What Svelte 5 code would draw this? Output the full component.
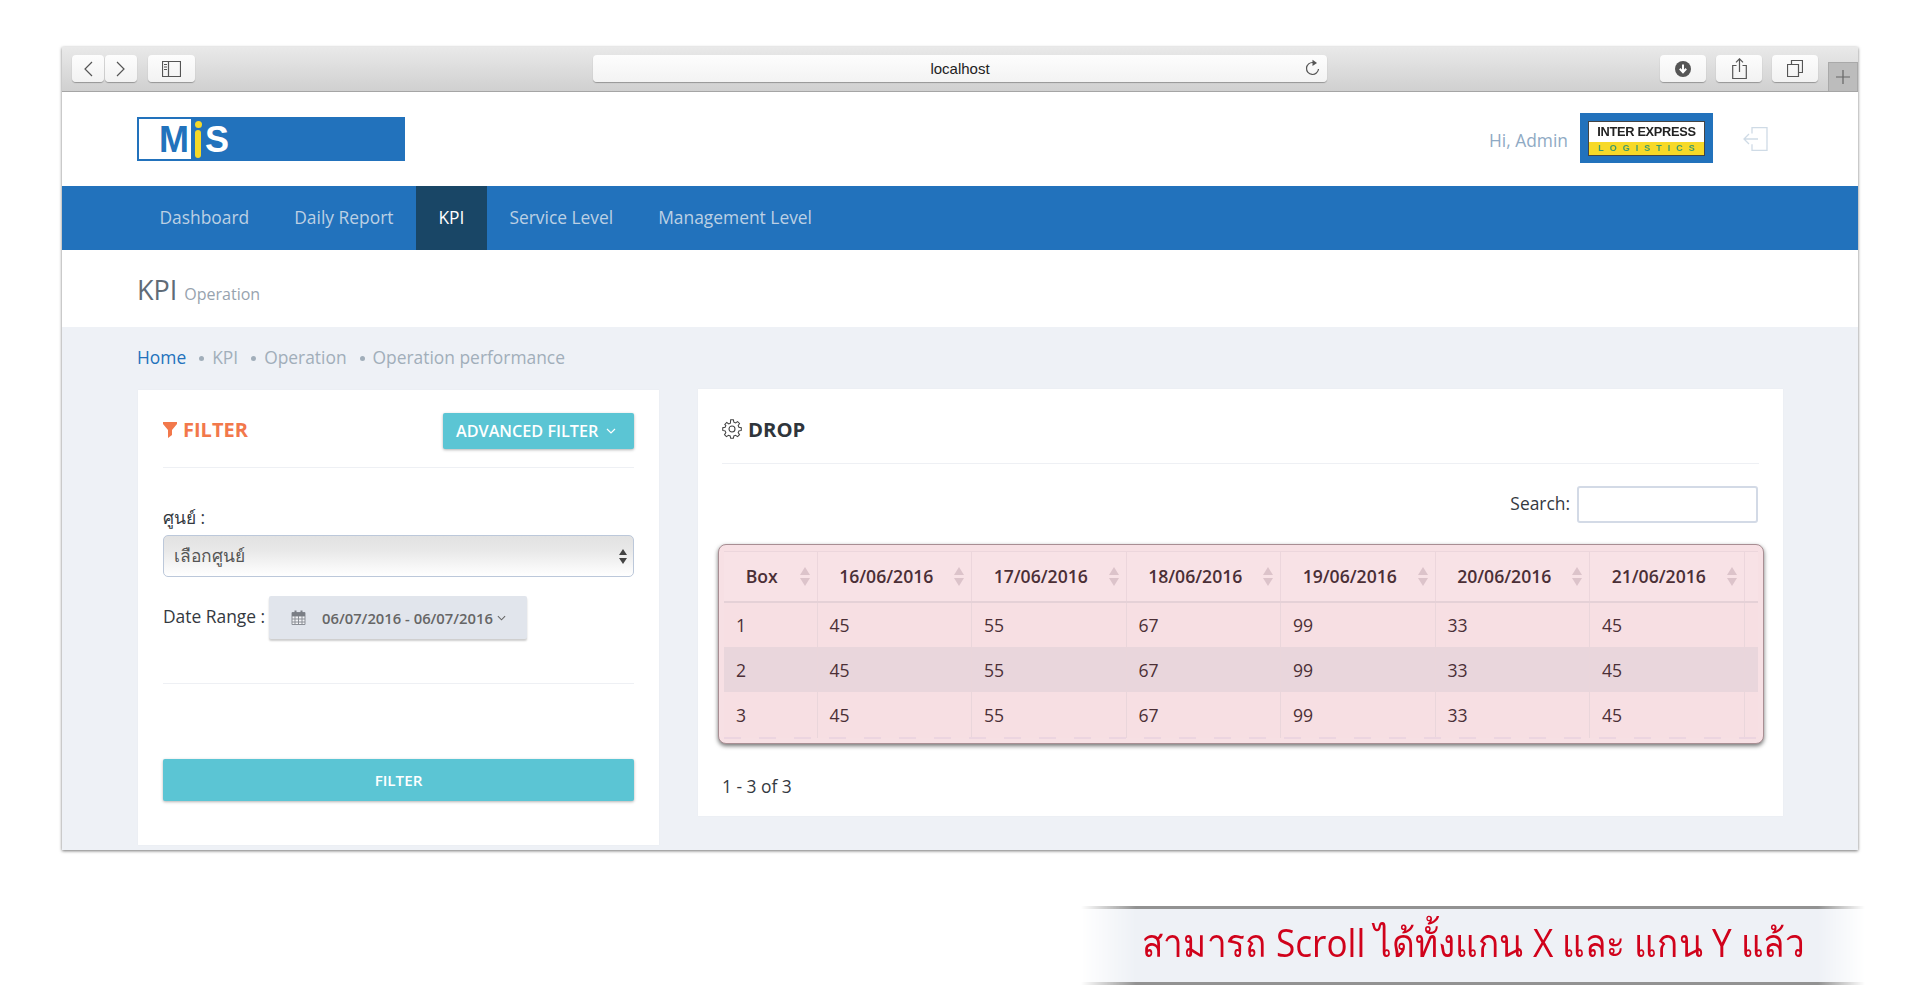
<script>
  const navItems = ['Dashboard', 'Daily Report', 'KPI', 'Service Level', 'Management Level'];
  const crumbs = ['KPI', 'Operation', 'Operation performance'];
  const dates = ['16/06/2016', '17/06/2016', '18/06/2016', '19/06/2016', '20/06/2016', '21/06/2016'];
  const values = [45, 55, 67, 99, 33, 45];
  const rows = [1, 2, 3];
</script>

<div class="page">
  <div class="window">
    <div class="toolbar">
      <div class="tb-group">
        <div class="tb-btn nav-btn">
          <svg width="12" height="18" viewBox="0 0 12 18"><path d="M10 2 3 9l7 7" /></svg>
        </div>
        <div class="tb-btn nav-btn">
          <svg width="12" height="18" viewBox="0 0 12 18"><path d="M2 2l7 7-7 7" /></svg>
        </div>
        <div class="tb-btn side-btn">
          <svg width="19" height="16" viewBox="0 0 19 16"><path d="M.5.5h18v15H.5zM6.5.5v15M2 3.5h3M2 6h3M2 8.5h3" /></svg>
        </div>
      </div>
      <div class="address">
        <span>localhost</span>
        <svg class="reload" width="16" height="18" viewBox="0 0 16 18"><path d="M13.5 10a6 6 0 1 1-5.5-6.500" /><path class="solid" d="M7.500 0.800 12 4 7.500 7z" /></svg>
      </div>
      <div class="tb-group right">
        <div class="tb-btn wide-btn">
          <svg width="16" height="16" viewBox="0 0 16 16"><circle class="solid" cx="8" cy="8" r="8" /><path class="white" d="M8 3.500v7M4.800 7.800 8 11.200l3.200-3.400" /></svg>
        </div>
        <div class="tb-btn wide-btn">
          <svg width="15" height="21" viewBox="0 0 15 21"><path d="M4.500 7.500H.7v13h13.600v-13h-3.800M7.500 14V1M4 4.300 7.500.8 11 4.300" /></svg>
        </div>
        <div class="tb-btn wide-btn">
          <svg width="16" height="17" viewBox="0 0 16 17"><path d="M.5 4.500h11v12H.5zM4.500 4.500v-4h11v12h-4" /></svg>
        </div>
      </div>
      <div class="plus-tab">
        <svg width="14" height="14" viewBox="0 0 14 14"><path d="M7 0v14M0 7h14" /></svg>
      </div>
    </div>

    <header class="top">
      <div class="mis-logo">
        <div class="mis-box"><span class="mis-m">M</span></div>
        <span class="mis-i"></span>
        <span class="mis-s">S</span>
      </div>
      <div class="user">
        <span class="hi">Hi, Admin</span>
        <div class="ie-logo">
          <div class="ie-inner">
            <div class="ie-name">INTER EXPRESS</div>
            <div class="ie-sub">LOGISTICS</div>
          </div>
        </div>
        <svg class="logout" width="25" height="24" viewBox="0 0 25 24"><path d="M9 6.500V.7h15v22.600H9v-6M1 12h14M6 7l-5 5 5 5" /></svg>
      </div>
    </header>

    <nav class="mainnav">
      {#each navItems as item}
        <a href="#top" class="nav-item" class:active={item === 'KPI'}>{item}</a>
      {/each}
    </nav>

    <div class="titlebar">
      <h1>KPI</h1>
      <small>Operation</small>
    </div>

    <main class="content">
      <div class="breadcrumb">
        <a href="#top">Home</a>
        {#each crumbs as c}
          <i class="dot"></i>
          <span>{c}</span>
        {/each}
      </div>

      <div class="columns">
        <section class="card filter-card">
          <div class="filter-head">
            <div class="filter-title">
              <svg width="14" height="16" viewBox="0 0 14 16"><path d="M0 0h14v2L9 8v5l-4 3V8L0 2z" /></svg>
              FILTER
            </div>
            <button class="adv-btn">ADVANCED FILTER
              <svg width="10" height="6" viewBox="0 0 10 6"><path d="M1 1l4 4 4-4" /></svg>
            </button>
          </div>

          <div class="field-label">ศูนย์ :</div>
          <div class="fake-select">
            <span>เลือกศูนย์</span>
            <svg width="8" height="15" viewBox="0 0 8 15"><path d="M4 0l4 6H0zM4 15 0 9h8z" /></svg>
          </div>

          <div class="date-row">
            <span class="date-label">Date Range :</span>
            <button class="date-btn">
              <svg width="15" height="15" viewBox="0 0 15 15"><path class="cal" d="M1 2.500h13V14.500H1zM1 6h13M4 6v8.500M7.500 6v8.500M11 6v8.500M1 9h13M1 12h13" /><path class="cal-top" d="M1 2.500h13V6H1zM3.500.5h2v3h-2zM9.500.5h2v3h-2z" /></svg>
              <span>06/07/2016 - 06/07/2016</span>
              <svg class="chev" width="9" height="6" viewBox="0 0 10 6"><path d="M1 1l4 4 4-4" /></svg>
            </button>
          </div>

          <div class="filter-foot">
            <button class="filter-btn">FILTER</button>
          </div>
        </section>

        <section class="card drop-card">
          <div class="drop-head">
            <svg width="20" height="20" viewBox="0 0 24 24"><circle cx="12" cy="12" r="3.600" /><path d="M10.300 1.500h3.400l.6 3 2.100.9 2.600-1.700 2.400 2.400-1.700 2.600.9 2.100 3 .6v3.400l-3 .6-.9 2.100 1.700 2.600-2.400 2.400-2.600-1.700-2.100.9-.6 3h-3.400l-.6-3-2.100-.9-2.600 1.700-2.400-2.400 1.700-2.600-.9-2.100-3-.6v-3.400l3-.6.9-2.100L3 7.300l2.400-2.400L8 6.600l2-.9z" transform="translate(.5 -.5) scale(.96)" /></svg>
            <span>DROP</span>
          </div>

          <div class="search-row">
            <label for="tbl-search">Search:</label>
            <input id="tbl-search" type="text" />
          </div>

          <div class="table-wrap">
            <table>
              <thead>
                <tr>
                  <th class="first"><span>Box</span>
                    <svg class="sort" width="12" height="19" viewBox="0 0 12 19"><path d="M6 0l5 8H1zM6 19l-5-8h10z" /></svg>
                  </th>
                  {#each dates as d}
                    <th><span>{d}</span>
                      <svg class="sort" width="12" height="19" viewBox="0 0 12 19"><path d="M6 0l5 8H1zM6 19l-5-8h10z" /></svg>
                    </th>
                  {/each}
                  <th class="spacer"></th>
                </tr>
              </thead>
              <tbody>
                {#each rows as r}
                  <tr class:alt={r === 2}>
                    <td class="first">{r}</td>
                    {#each values as v}
                      <td>{v}</td>
                    {/each}
                    <td class="spacer"></td>
                  </tr>
                {/each}
              </tbody>
            </table>
            <div class="dashes"></div>
          </div>

          <div class="pager">1 - 3 of 3</div>
        </section>
      </div>
    </main>
  </div>

  <div class="caption"><span>สามารถ Scroll ได้ทั้งแกน X และ แกน Y แล้ว</span></div>
</div>

<style>
  :global(body) {
    margin: 0;
    background: #fff;
    font-family: "Open Sans", "Noto Sans", sans-serif;
    font-size: 17.4px;
    color: #34393f;
  }

  .page {
    display: flex;
    flex-direction: column;
    padding-top: 47px;
  }

  .window {
    margin-left: 62px;
    width: 1796px;
    height: 803px;
    overflow: hidden;
    background: #eef1f6;
    box-shadow: 0 1px 3px rgba(0, 0, 0, 0.55);
    display: flex;
    flex-direction: column;
  }

  /* browser chrome */
  .toolbar {
    flex: none;
    display: flex;
    background: linear-gradient(#e9e9e9, #d0d0d0);
    border-bottom: 1px solid #a5a5a5;
    padding: 8px 0 0 10px;
    height: 36px;
  }
  .tb-group {
    display: flex;
    gap: 1px;
    height: 27px;
  }
  .tb-group.right {
    gap: 10px;
    margin-left: 333px;
  }
  .tb-btn {
    background: linear-gradient(#fdfdfd, #f2f2f2);
    border-radius: 4px;
    box-shadow: 0 1px 1px rgba(0, 0, 0, 0.3);
    display: flex;
    align-items: center;
    justify-content: center;
  }
  .nav-btn { width: 32px; }
  .side-btn { width: 47px; margin-left: 10px; }
  .wide-btn { width: 46px; }
  .tb-btn svg, .reload {
    fill: none;
    stroke: #555;
    stroke-width: 1.2;
  }
  .tb-btn .solid, .reload .solid {
    fill: #555;
    stroke: none;
  }
  .tb-btn .white {
    stroke: #fff;
    stroke-width: 2;
  }
  .address {
    margin-left: 398px;
    width: 735px;
    height: 27px;
    background: linear-gradient(#fdfdfd, #f3f3f3);
    border-radius: 4px;
    box-shadow: 0 1px 1px rgba(0, 0, 0, 0.3);
    display: flex;
    align-items: center;
    justify-content: center;
    position: relative;
    font-size: 15px;
    font-family: "Liberation Sans", sans-serif;
    color: #222;
  }
  .reload {
    position: absolute;
    right: 6px;
    top: 4px;
  }
  .plus-tab {
    margin-left: 10px;
    margin-top: 7px;
    width: 30px;
    height: 29px;
    background: #bcbcbc;
    border: 1px solid #a9a9a9;
    border-bottom: none;
    box-sizing: border-box;
    display: flex;
    align-items: center;
    justify-content: center;
  }
  .plus-tab svg {
    fill: none;
    stroke: #666;
    stroke-width: 1.2;
  }

  /* header */
  .top {
    height: 94px;
    flex: none;
    background: #fff;
    display: flex;
    justify-content: space-between;
    align-items: center;
    padding: 0 90px 0 75px;
  }
  .mis-logo {
    width: 268px;
    height: 44px;
    background: #2272bc;
    display: flex;
    align-items: center;
    font-family: "Liberation Sans", sans-serif;
    font-weight: 700;
    box-sizing: border-box;
    padding: 2px;
  }
  .mis-box {
    width: 52px;
    height: 40px;
    background: #fff;
    display: flex;
    align-items: center;
    justify-content: flex-end;
    flex: none;
  }
  .mis-m {
    color: #2272bc;
    font-size: 36px;
    line-height: 39px;
    margin-right: 2px;
  }
  .mis-i {
    width: 6px;
    height: 28px;
    margin: 10px 0 0 4px;
    background: #f5d928;
    border-radius: 3px;
    position: relative;
    flex: none;
  }
  .mis-i::before {
    content: "";
    position: absolute;
    left: -0.500px;
    top: -9px;
    width: 7px;
    height: 7px;
    border-radius: 50%;
    background: #f5d928;
  }
  .mis-s {
    color: #fff;
    font-size: 36px;
    line-height: 39px;
    margin-left: 4px;
  }
  .user {
    display: flex;
    align-items: center;
  }
  .hi {
    color: #8faac4;
    margin-top: 2px;
    margin-right: 12px;
  }
  .ie-logo {
    width: 133px;
    height: 50px;
    margin-top: -2px;
    background: #2272bc;
    display: flex;
    align-items: center;
    justify-content: center;
  }
  .ie-inner {
    width: 115px;
    height: 33px;
    border: 1px solid #444;
    background: #fff;
    font-family: "Liberation Sans", sans-serif;
    text-align: center;
    filter: blur(0.4px);
  }
  .ie-name {
    height: 20px;
    line-height: 20px;
    font-size: 12.800px;
    font-weight: 700;
    color: #222;
    letter-spacing: -0.300px;
  }
  .ie-sub {
    height: 13px;
    line-height: 13px;
    background: #f7d928;
    color: #3d9a6a;
    font-size: 9px;
    font-weight: 700;
    letter-spacing: 6px;
    padding-left: 6px;
    box-sizing: border-box;
  }
  .logout {
    margin-left: 30px;
    fill: none;
    stroke: #cfdbe6;
    stroke-width: 1.300;
  }

  /* main nav */
  .mainnav {
    height: 64px;
    flex: none;
    background: #2272bc;
    display: flex;
    padding-left: 75px;
  }
  .nav-item {
    color: #bcd0e4;
    text-decoration: none;
    line-height: 63px;
    padding: 0 22.500px;
  }
  .nav-item.active {
    background: #194666;
    color: #fff;
  }

  .titlebar {
    height: 77px;
    flex: none;
    background: #fff;
    display: flex;
    align-items: baseline;
    padding-left: 75px;
    box-sizing: border-box;
    padding-top: 20px;
    gap: 7px;
    color: #5f6b77;
  }
  h1 {
    margin: 0;
    font-size: 27px;
    font-weight: 400;
    line-height: 40px;
  }
  small {
    font-size: 16px;
    color: #97a3ae;
  }

  /* content */
  .content {
    padding: 17px 75px 0 75px;
  }
  .breadcrumb {
    display: flex;
    align-items: center;
    height: 26px;
    margin-bottom: 20px;
    color: #a1aeba;
  }
  .breadcrumb a {
    color: #2272bc;
    text-decoration: none;
  }
  .dot {
    width: 5px;
    height: 5px;
    border-radius: 50%;
    background: #a1aeba;
    margin: 3px 8px 0 13px;
  }

  .columns {
    display: flex;
    align-items: flex-start;
    gap: 39px;
    padding-left: 1px;
  }
  .card {
    background: #fff;
    box-sizing: border-box;
    box-shadow: 0 0 1px rgba(0, 0, 0, 0.05);
  }
  .filter-card {
    width: 522px;
    height: 455px;
    padding: 23px 25px;
  }
  .filter-head {
    display: flex;
    justify-content: space-between;
    align-items: center;
    height: 36px;
    padding-bottom: 18px;
    border-bottom: 1px solid #eef0f4;
    margin-bottom: 37px;
  }
  .filter-title {
    display: flex;
    align-items: center;
    gap: 6px;
    color: #f2784b;
    font-size: 20px;
    line-height: 26px;
    margin-top: -2px;
    font-weight: 700;
  }
  .filter-title svg { fill: #f2784b; }
  .adv-btn {
    width: 191px;
    height: 36px;
    background: #5bc5d4;
    border: none;
    border-radius: 2px;
    box-shadow: 0 1px 3px rgba(0, 0, 0, 0.3);
    color: #fff;
    font: 600 16.200px "Open Sans", sans-serif;
    display: flex;
    align-items: center;
    justify-content: flex-start;
    gap: 8px;
    padding: 0 0 0 13px;
  }
  .adv-btn svg, .chev {
    fill: none;
    stroke: currentColor;
    stroke-width: 1.200;
  }
  .field-label {
    height: 24px;
    line-height: 24px;
    margin-bottom: 6px;
  }
  .fake-select {
    height: 42px;
    box-sizing: border-box;
    border: 1px solid #bcc8da;
    border-radius: 5px;
    background: linear-gradient(#e2e2e2, #e8e8e8 35%, #fff);
    display: flex;
    align-items: center;
    justify-content: space-between;
    padding: 0 6px 0 10px;
    color: #555;
  }
  .fake-select svg { fill: #444; }
  .date-row {
    display: flex;
    align-items: center;
    margin-top: 19px;
  }
  .date-label {
    margin-right: 3px;
    margin-top: -4px;
    width: 103px;
    white-space: nowrap;
  }
  .date-btn {
    width: 258px;
    height: 43px;
    background: #e1e5ec;
    border: none;
    border-radius: 2px;
    box-shadow: 0 2px 2px rgba(0, 0, 0, 0.2);
    color: #666;
    font: 600 14.800px "Open Sans", sans-serif;
    display: flex;
    align-items: center;
    padding: 0 0 0 22px;
  }
  .date-btn span { margin: 0 4px 0 16px; white-space: nowrap; }
  .cal {
    fill: #f3f4f7;
    stroke: #8b8f96;
    stroke-width: 1;
  }
  .cal-top { fill: #7a7e85; }
  .filter-foot {
    margin-top: 44px;
    border-top: 1px solid #eef0f4;
    padding-top: 75px;
  }
  .filter-btn {
    display: block;
    width: 100%;
    height: 42px;
    background: #5bc5d4;
    border: none;
    border-radius: 2px;
    box-shadow: 0 1px 3px rgba(0, 0, 0, 0.3);
    color: #fff;
    font: 600 15.200px "Open Sans", sans-serif;
  }

  .drop-card {
    flex: 1;
    height: 427px;
    padding: 0 24px;
    margin-top: -1px;
  }
  .drop-head {
    height: 75px;
    padding-top: 5px;
    box-sizing: border-box;
    display: flex;
    align-items: center;
    gap: 6px;
    border-bottom: 1px solid #eef0f4;
    font-size: 20.300px;
    font-weight: 700;
    color: #2f353b;
  }
  .drop-head svg {
    fill: none;
    stroke: #444;
    stroke-width: 1.300;
  }
  .search-row {
    display: flex;
    justify-content: flex-end;
    align-items: center;
    gap: 7px;
    margin-top: 22px;
  }
  .search-row label { margin-top: -3px; }
  .search-row input {
    width: 181px;
    height: 37px;
    box-sizing: border-box;
    border: 2px solid #d3dae6;
    border-radius: 3px;
    background: #fff;
    padding: 0;
    margin-right: 1px;
  }

  .table-wrap {
    margin: 21px -5px 0 -4px;
    height: 200px;
    box-sizing: border-box;
    padding: 6px 5px 0 5px;
    background: #f7e0e4;
    border: 1px solid #a88e93;
    border-radius: 8px;
    box-shadow: 0 2px 4px rgba(0, 0, 0, 0.55);
    position: relative;
  }
  table {
    border-collapse: collapse;
    table-layout: fixed;
    width: 1034px;
    color: #4b2f36;
  }
  th {
    width: 154.500px;
    height: 50px;
    box-sizing: border-box;
    padding: 0;
    background: #f8e2e6;
    border-top: 1px solid #ecd6dc;
    border-bottom: 2px solid #e5d1d7;
    border-right: 1px solid #ecd6dc;
    font-size: 17.6px;
    font-weight: 600;
    position: relative;
  }
  th span {
    display: block;
    padding-right: 16px;
  }
  th.first { width: 93px; }
  th.first span { padding-right: 17px; }
  th.spacer, td.spacer {
    width: auto;
    border-right: none;
  }
  .sort {
    position: absolute;
    right: 6px;
    top: 15px;
    fill: #dcc3ca;
  }
  td {
    height: 45.400px;
    box-sizing: border-box;
    padding: 0 0 0 12px;
    border-right: 1px solid #ead6db;
    background: #f7dfe3;
    font-size: 17.6px;
  }
  tr.alt td { background: #e9d6dc; }
  .dashes {
    position: absolute;
    left: 5px;
    right: 5px;
    bottom: 4px;
    height: 2px;
    background: repeating-linear-gradient(90deg, #ecd5e0 0 17px, transparent 17px 35px);
  }
  .pager {
    margin-top: 30px;
    line-height: 24px;
  }

  .caption {
    margin: 56px 55px 0 auto;
    width: 784px;
    height: 79px;
    box-sizing: border-box;
    border-top: 3px solid #929292;
    border-bottom: 3px solid #929292;
    background: #eef1f6;
    mask-image: linear-gradient(90deg, transparent, #000 7%, #000 94%, transparent);
    -webkit-mask-image: linear-gradient(90deg, transparent, #000 7%, #000 94%, transparent);
    color: #d0021b;
    font-size: 39px;
    line-height: 66px;
    text-align: center;
    white-space: nowrap;
  }
  .caption span {
    display: inline-block;
    transform: scaleX(0.9);
  }
</style>
